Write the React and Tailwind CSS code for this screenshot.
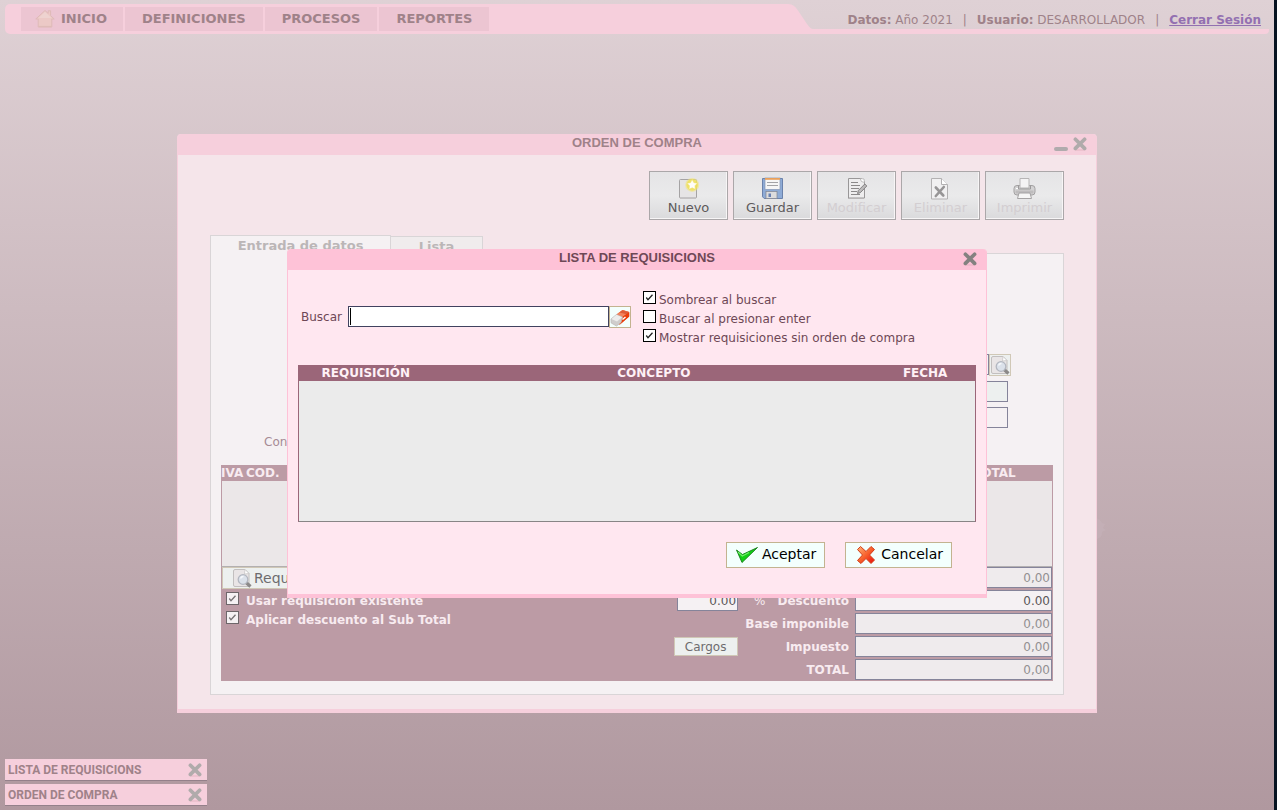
import { useId } from "react";

const MENU = ["DEFINICIONES", "PROCESOS", "REPORTES"];

function HouseIcon() {
  return (
    <svg width="20" height="20" viewBox="0 0 20 20" aria-hidden="true">
      <path d="M10 1.5 0.8 10h2.4v8h13.6v-8h2.4L15.6 6.6V1.8h-2.4v2.6z" fill="#ecc9c6" stroke="#dfbab8" strokeWidth="1" strokeLinejoin="round" />
      <path d="M10 2.8 3.6 9h12.8z" fill="#eed3d0" />
      <path d="M3.8 17.5h12.6" stroke="#dfbcb8" strokeWidth="1.2" />
    </svg>
  );
}

function CrossIcon({ dim }) {
  return (
    <svg width="14" height="14" viewBox="0 0 14 14" aria-hidden="true">
      <path d="M2.5 13h9" stroke="#d9a6b6" strokeOpacity="0.6" strokeWidth="1.2" strokeLinecap="round" />
      <path d="M2.4 2.2 11.6 11.4M11.6 2.2 2.4 11.4" stroke={dim ? "#b0abab" : "#858180"} strokeWidth="3.7" strokeLinecap="round" />
    </svg>
  );
}

function NewIcon() {
  return (
    <svg width="24" height="24" viewBox="0 0 24 24" aria-hidden="true">
      <rect x="2.5" y="3.5" width="17" height="18.5" rx="1" fill="#e6e4e5" stroke="#a5a3a4" />
      <path d="M3 22.5h16" stroke="#c5c2c3" />
      <circle cx="15.2" cy="8.9" r="7" fill="#f3e67c" fillOpacity="0.55" />
      <circle cx="15.2" cy="8.9" r="5.8" fill="#efe05a" fillOpacity="0.8" />
      <path d="m15.2 3.6 1.7 3.1 3.4.6-2.4 2.5.4 3.5-3.1-1.500-3.1 1.500.4-3.500-2.400-2.500 3.400-.6z" fill="#fffdf8" stroke="#f0e36a" strokeWidth="0.5" />
    </svg>
  );
}

function SaveIcon() {
  return (
    <svg width="24" height="24" viewBox="0 0 24 24" aria-hidden="true">
      <path d="M1.500 2.500h20v20H3.200l-1.700-1.700z" fill="#8eabd6" stroke="#6b82ab" />
      <rect x="4" y="2" width="15" height="11.500" fill="#f6f6f6" stroke="#8496b5" strokeWidth="0.7" />
      <rect x="4" y="2" width="15" height="1.800" fill="#e9a05b" />
      <path d="M6 6.500h11M6 9.500h11" stroke="#a3a3a6" />
      <rect x="5" y="15.500" width="11" height="7" fill="#dcdcdd" stroke="#7f8490" strokeWidth="0.7" />
      <rect x="7.500" y="17.500" width="2.500" height="3.500" fill="#6881b4" />
    </svg>
  );
}

function EditIcon() {
  return (
    <svg width="24" height="24" viewBox="0 0 24 24" aria-hidden="true">
      <path d="M3.500 2.500h13l3 3v16.500h-16z" fill="#eeedee" stroke="#999798" />
      <path d="M6 6.500h7M6 9.500h9M6 12.500h8M6 15.500h6M6 18.500h9" stroke="#8b898a" />
      <path d="m12.500 17.500.800-3 6.500-6.500 2 2-6.500 6.700z" fill="#bcbabb" stroke="#7a7879" strokeWidth="0.900" />
      <path d="m15 2.500 4 .500.500 3.500-3-1z" fill="#fff" stroke="#a9a7a8" strokeWidth="0.700" />
      <path d="M3 22.500h16" stroke="#b9b6b7" />
    </svg>
  );
}

function DeleteIcon() {
  return (
    <svg width="24" height="24" viewBox="0 0 24 24" aria-hidden="true">
      <path d="M2.500 2.500h10l6 6v14.500h-16z" fill="#f1f0f1" stroke="#b3b1b2" />
      <path d="M12.500 2.500v6h6" fill="#fff" stroke="#b3b1b2" />
      <path d="m6.800 11.500 7.500 8m.5-8.500-8 9" stroke="#979596" strokeWidth="2.600" strokeLinecap="round" />
    </svg>
  );
}

function PrintIcon() {
  return (
    <svg width="24" height="24" viewBox="0 0 24 24" aria-hidden="true">
      <rect x="1" y="9.500" width="21" height="9.500" rx="3" fill="#d3d2d3" stroke="#a3a1a2" />
      <path d="M2.500 14.500h18v3h-18z" fill="#bebcbd" />
      <path d="M7 2.500h9v9.500H7z" fill="#f4f3f4" stroke="#b6b4b5" />
      <path d="M5.500 9.500v3.500h12V9.500" fill="none" stroke="#9b999a" />
      <path d="m6 17-1.500 5.500h14L17 17z" fill="#f6f6f6" stroke="#a5a3a4" />
      <path d="M3 12.500h2" stroke="#fff" />
    </svg>
  );
}

function SearchPageIcon() {
  return (
    <svg width="20" height="20" viewBox="0 0 20 20" aria-hidden="true">
      <path d="M3 1.500h10l4 4V18.500H3a1.500 1.500 0 0 1-1.500-1.500V3A1.500 1.500 0 0 1 3 1.500z" fill="#e9e5e6" stroke="#c2bfbf" />
      <path d="M13 1.500 12.500 6l4.500-.5z" fill="#fff" stroke="#c9c6c6" strokeWidth="0.800" />
      <path d="m14 14.500 4.500 4" stroke="#8b8989" strokeWidth="3.200" />
      <circle cx="11" cy="11.500" r="4.800" fill="#dbe1ea" stroke="#b3b7c0" strokeWidth="1.300" />
      <path d="M8.500 10.500a3 3 0 0 1 3-2" fill="none" stroke="#f6f8fb" strokeWidth="1.400" />
    </svg>
  );
}

function EraserIcon() {
  return (
    <svg width="20" height="20" viewBox="0 0 20 20" aria-hidden="true">
      <path d="M6.500 7.500 12.500 3l6.700 2v4.500L9.500 18z" fill="#f0481a" />
      <path d="M6.500 7.500 12.500 3l6.700 2-6.700 5z" fill="#f3835c" />
      <path d="m9.500 5.500 3-2.300 6.500 2-2.500 2z" fill="#dd5b38" />
      <path d="m12.500 10 6.700-4.800v4.300L11 16.500z" fill="#ea3d0b" />
      <path d="M1 12 6.500 7.500l6 2.500-1.500 5.500-4.500 3.500L1.200 16z" fill="#cfcdcc" stroke="#b9b6b4" strokeWidth="0.700" />
      <path d="m1.500 12 5-4.200 5.500 2.400L7 14.500z" fill="#ededec" />
      <path d="m12.500 12.500 3-2.500" stroke="#fff" strokeWidth="1.400" />
    </svg>
  );
}

function AcceptIcon() {
  return (
    <svg width="24" height="20" viewBox="0 0 24 20" aria-hidden="true">
      <path d="m1.500 5 6 4.500L22.500 2.500 7 17.500z" fill="#12cf16" stroke="#147a17" strokeWidth="0.900" strokeLinejoin="round" />
      <path d="m3 7 4.300 4L14 7.500" fill="none" stroke="#70ee6b" strokeWidth="1.100" />
    </svg>
  );
}

function CancelIcon() {
  const id = useId();
  return (
    <svg width="20" height="20" viewBox="0 0 20 20" aria-hidden="true">
      <defs>
        <linearGradient id={id} x1="0" y1="0" x2="1" y2="1">
          <stop offset="0" stopColor="#ffb57a" />
          <stop offset="0.500" stopColor="#f8602c" />
          <stop offset="1" stopColor="#e80c0c" />
        </linearGradient>
      </defs>
      <path d="m1.500 4.500 3-3L10 6.500l5-5 3.500 3L13.500 10l5 5-3.500 3.500-5-5-5 5L1.500 15.500 6.500 10z" fill={`url(#${id})`} stroke="#d23d17" strokeLinejoin="round" />
    </svg>
  );
}

function Check({ label, checked, dim }) {
  return (
    <label className={dim ? "flex h-[19px] items-center gap-[7px]" : "flex h-[19px] items-center gap-[3px]"}>
      <span className="relative -mt-1 size-[13px] shrink-0">
        <input
          type="checkbox"
          defaultChecked={checked}
          className={
            dim
              ? "peer block size-[13px] appearance-none border border-[#6e666a] bg-[#f5f1f3]"
              : "peer block size-[13px] appearance-none border border-black bg-white"
          }
        />
        <svg viewBox="0 0 13 13" className="pointer-events-none absolute inset-0 hidden peer-checked:block" aria-hidden="true">
          <path d="M3.300 6.500 5 8.800 9.500 3.800" fill="none" stroke={dim ? "#757173" : "#222"} strokeWidth="1.300" />
        </svg>
      </span>
      <span>{label}</span>
    </label>
  );
}

function ToolButton({ icon, label, disabled }) {
  return (
    <button
      type="button"
      disabled={disabled}
      className="flex h-[49px] w-[79px] flex-col items-center border border-[#aba7a9] bg-linear-to-b from-[#e5e4e6] via-[#eaeaeb] to-[#dadadc] pt-1 text-[13px] leading-4 text-[#5d5a5b] shadow-[inset_-1px_-1px_0_#f7f5f6] disabled:text-[#d3ced1]"
    >
      {icon}
      {label}
    </button>
  );
}

function TotalRow({ label, value, strong, children }) {
  const id = useId();
  return (
    <div className="flex h-[21px] items-center justify-end">
      {children}
      {label && (
        <label htmlFor={id} className="mr-[6px] font-bold">
          {label}
        </label>
      )}
      <input
        id={id}
        aria-label={label || "Sub Total"}
        defaultValue={value}
        className={
          strong
            ? "h-[21px] w-[197px] border border-[#85849a] bg-[#f5f1f3] px-px text-right text-[#5b5759]"
            : "h-[21px] w-[197px] border border-[#85849a] bg-[#efebed] px-px text-right text-[#939092]"
        }
      />
    </div>
  );
}

function TaskItem({ title }) {
  return (
    <div className="flex h-[22px] w-[202px] items-center justify-between border-b border-[#94808a] bg-[#f6cfdc] pr-[5px] pl-[3px] font-['Roboto',sans-serif] text-[12px] font-bold text-[#9f8289]">
      <span>{title}</span>
      <button type="button" aria-label={`Cerrar ${title}`}>
        <CrossIcon dim />
      </button>
    </div>
  );
}

function Header() {
  return (
    <header className="flex h-[30px] items-stretch">
      <nav className="flex w-[783px] items-start gap-[2px] rounded-l-[5px] bg-[#f6cfdc] pt-[3px] pl-4 text-[13px] font-bold text-[#9f8289]">
        <button type="button" className="flex h-6 items-center gap-[6px] bg-[#ecc5d2] pr-4 pl-[14px]">
          <HouseIcon />
          INICIO
        </button>
        {MENU.map((m) => (
          <button key={m} type="button" className="h-6 bg-[#ecc5d2] px-[17px]">
            {m}
          </button>
        ))}
      </nav>
      <svg width="26" height="30" viewBox="0 0 26 30" className="shrink-0" aria-hidden="true">
        <path d="M0 0c5 0 8 3 11 8l8 12c3 4 4 5 7 5v5H0z" fill="#f6cfdc" />
      </svg>
      <div className="flex flex-1 items-center justify-end gap-[10px] rounded-br-[4px] border-b-[5px] border-[#f6cfdc] pt-[6px] pr-2 text-[12px] text-[#9f8289]">
        <span>
          <b>Datos:</b> Año 2021
        </span>
        <span>|</span>
        <span>
          <b>Usuario:</b> DESARROLLADOR
        </span>
        <span>|</span>
        <a href="#salir" className="font-bold text-[#9370b1] underline">
          Cerrar Sesión
        </a>
      </div>
    </header>
  );
}

function OrderWindow() {
  return (
    <section className="w-[920px] rounded-t-[4px] border-x border-b-4 border-[#f6cfdc] bg-[#f5e5ea]">
      <div className="flex h-[21px] items-center rounded-t-[3px] bg-[#f6cfdc] pr-[9px] pb-px pl-[42px]">
        <h1 className="flex-1 pb-[2px] text-center font-['Liberation_Sans',sans-serif] text-[13px] font-bold text-[#9f8289]">ORDEN DE COMPRA</h1>
        <div className="flex items-center gap-[5px]">
          <button type="button" aria-label="Minimizar" className="mt-[10px] h-[4px] w-[14px] rounded-sm bg-[#b0abad]" />
          <button type="button" aria-label="Cerrar">
            <CrossIcon dim />
          </button>
        </div>
      </div>
      <div className="px-8 pt-4 pb-[14px]">
        <div className="flex justify-end gap-[5px]">
          <ToolButton icon={<NewIcon />} label="Nuevo" />
          <ToolButton icon={<SaveIcon />} label="Guardar" />
          <ToolButton icon={<EditIcon />} label="Modificar" disabled />
          <ToolButton icon={<DeleteIcon />} label="Eliminar" disabled />
          <ToolButton icon={<PrintIcon />} label="Imprimir" disabled />
        </div>
        <div className="mt-[15px] flex h-[18px] items-end text-[13px] font-bold text-[#bbb6b7]">
          <button type="button" className="relative z-10 -mb-px h-[19px] w-[181px] border border-b-0 border-[#d9d5d7] bg-[#f5f1f3]">
            Entrada de datos
          </button>
          <button type="button" className="h-[17px] w-[92px] border border-b-0 border-l-0 border-[#d9d5d7] bg-[#f0eced]">
            Lista
          </button>
        </div>
        <div className="border border-[#d9d5d7] bg-[#f5f1f3] px-[10px] pt-[100px] pb-[13px] text-[12px]">
          <div className="flex flex-col gap-[5px] pr-[45px] text-[#a68b95]">
            <div className="-mr-[3px] flex h-[22px] justify-end">
              <input aria-label="Proveedor" className="h-[21px] w-[260px] border border-[#85849a] bg-[#f5f1f3]" />
              <button type="button" aria-label="Buscar proveedor" className="flex size-[22px] items-center justify-center border border-[#d0c8b6] bg-[#edf0ef]">
                <SearchPageIcon />
              </button>
            </div>
            <input aria-label="RIF" className="h-[21px] w-[300px] self-end border border-[#85849a] bg-[#edf0ef]" />
            <input aria-label="Fecha" className="h-[21px] w-[300px] self-end border border-[#85849a] bg-[#f5f1f3]" />
            <p className="h-[32px] pl-[43px] leading-[18px]">Concepto</p>
          </div>
          <div className="bg-[#bc9ba5] pb-px text-[#f8ebf0]">
            <table className="w-full table-fixed border-separate border-spacing-0">
              <thead className="text-left leading-4">
                <tr>
                  <th className="w-[25px] p-0">IVA</th>
                  <th className="w-[727px] p-0">COD.</th>
                  <th className="p-0">TOTAL</th>
                </tr>
              </thead>
              <tbody>
                <tr>
                  <td colSpan={3} className="h-[86px] border-x border-b border-[#bc9ba5] border-b-[#b3b0b1] bg-[#ebe7e8] p-0" />
                </tr>
              </tbody>
            </table>
            <div className="flex justify-between px-px">
              <div>
                <button type="button" className="flex h-[22px] items-center gap-[2px] border border-[#d0c8b6] bg-[#edf0ef] px-[9px] text-[14px] text-[#6e6c6e]">
                  <SearchPageIcon />
                  Requisición
                </button>
                <div className="mt-[2px] pl-1 font-bold">
                  <Check dim checked label="Usar requisición existente" />
                  <Check dim checked label="Aplicar descuento al Sub Total" />
                </div>
              </div>
              <div className="flex flex-col gap-[2px] text-[12px]">
                <TotalRow value="0,00" />
                <TotalRow label="Descuento" value="0.00" strong>
                  <input aria-label="Porcentaje" defaultValue="0.00" className="mr-4 h-[21px] w-[61px] border border-[#85849a] bg-[#f5f1f3] px-px text-right text-[#5b5759]" />
                  <span className="mr-3">%</span>
                </TotalRow>
                <TotalRow label="Base imponible" value="0,00" />
                <TotalRow label="Impuesto" value="0,00">
                  <button type="button" className="mr-12 h-[19px] w-[64px] border border-[#d0c8b6] bg-[#edf0ef] text-[#6e6c6e]">
                    Cargos
                  </button>
                </TotalRow>
                <TotalRow label="TOTAL" value="0,00" />
              </div>
            </div>
          </div>
        </div>
      </div>
    </section>
  );
}

function RequisitionDialog() {
  return (
    <section role="dialog" aria-label="Lista de requisicions" className="w-[700px] rounded-t-[4px] border-x border-b-4 border-[#fec2d7] bg-[#ffe7f0] text-[12px] text-[#6e4856]">
      <div className="flex h-[21px] items-center rounded-t-[3px] bg-[#fec2d7] pr-[9px] pb-px pl-[23px]">
        <h2 className="flex-1 pb-[2px] text-center font-['Liberation_Sans',sans-serif] text-[13px] font-bold">LISTA DE REQUISICIONS</h2>
        <button type="button" aria-label="Cerrar">
          <CrossIcon />
        </button>
      </div>
      <div className="px-[10px] pt-5 pb-[26px]">
        <div className="flex items-center gap-3 pl-[3px]">
          <div className="flex items-center pb-1">
            <label htmlFor="buscar" className="mr-[6px]">
              Buscar
            </label>
            <div className="relative">
              <input id="buscar" className="block h-[21px] w-[261px] border border-[#41425f] bg-white px-px" />
              <span className="absolute top-[2px] left-[2px] h-[17px] w-px bg-black" />
            </div>
            <button type="button" aria-label="Limpiar" className="flex size-[22px] items-center justify-center border border-[#c3b390] bg-[#f3fffd]">
              <EraserIcon />
            </button>
          </div>
          <div>
            <Check checked label="Sombrear al buscar" />
            <Check label="Buscar al presionar enter" />
            <Check checked label="Mostrar requisiciones sin orden de compra" />
          </div>
        </div>
        <table className="mt-[18px] w-full table-fixed border-separate border-spacing-0">
          <thead className="bg-[#9b6679] leading-4 text-[#fff1f6]">
            <tr>
              <th className="w-1/5 p-0">REQUISICIÓN</th>
              <th className="w-[65%] p-0">CONCEPTO</th>
              <th className="p-0">FECHA</th>
            </tr>
          </thead>
          <tbody>
            <tr>
              <td colSpan={3} className="h-[141px] border-x border-b border-[#9b6679] border-b-[#888586] bg-[#ebebeb] p-0" />
            </tr>
          </tbody>
        </table>
        <div className="mt-5 flex justify-end gap-5 pr-6 text-[14px] text-black">
          <button type="button" className="flex h-[26px] items-center gap-[3px] border border-[#c3b390] bg-[#f3fffd] px-2">
            <AcceptIcon />
            <span className="pb-[2px]">Aceptar</span>
          </button>
          <button type="button" className="flex h-[26px] items-center gap-[5px] border border-[#c3b390] bg-[#f3fffd] pr-2 pl-[10px]">
            <CancelIcon />
            <span className="pb-[2px]">Cancelar</span>
          </button>
        </div>
      </div>
    </section>
  );
}

export default function App() {
  return (
    <div className="relative flex min-h-screen flex-col justify-between overflow-hidden border-r-[3px] border-[#061321] bg-linear-to-b from-[#dfd1d5] to-[#b0989f] px-[5px] pt-1 pb-[4px] font-['DejaVu_Sans',sans-serif]">
      <Header />
      <svg width="18" height="24" viewBox="0 0 18 24" className="absolute top-[517px] left-1/2 ml-[451px]" aria-hidden="true">
        <path d="M6 1q6 0 8 5l3 1-2 4 3 2-4 2q1 6-8 8z" fill="#c5b1b8" fillOpacity="0.700" />
      </svg>
      <div className="absolute inset-x-0 top-[134px] flex justify-center">
        <OrderWindow />
      </div>
      <div className="absolute inset-x-0 top-[249px] z-20 flex justify-center">
        <RequisitionDialog />
      </div>
      <footer className="flex flex-col gap-[3px]">
        <TaskItem title="LISTA DE REQUISICIONS" />
        <TaskItem title="ORDEN DE COMPRA" />
      </footer>
    </div>
  );
}
